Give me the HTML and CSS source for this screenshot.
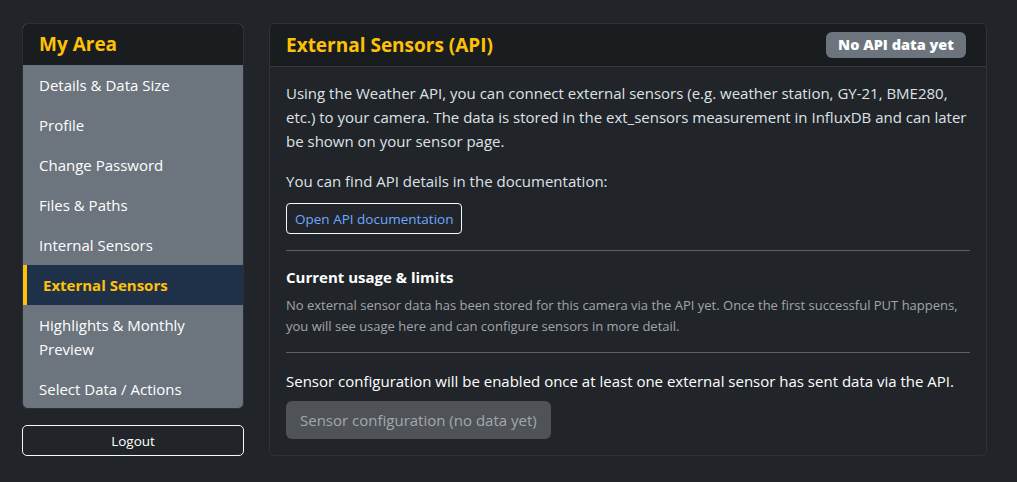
FILE: index.html
```html
<!DOCTYPE html>
<html lang="en">
<head>
<meta charset="utf-8">
<title>External Sensors</title>
<link rel="stylesheet" href="styles.css">
</head>
<body>
<div class="page">
  <aside class="side">
    <nav class="menu">
      <div class="menu-head">My Area</div>
      <a class="menu-item">Details &amp; Data Size</a>
      <a class="menu-item">Profile</a>
      <a class="menu-item">Change Password</a>
      <a class="menu-item">Files &amp; Paths</a>
      <a class="menu-item">Internal Sensors</a>
      <a class="menu-item active">External Sensors</a>
      <a class="menu-item">Highlights &amp; Monthly Preview</a>
      <a class="menu-item">Select Data / Actions</a>
    </nav>
    <button class="logout">Logout</button>
  </aside>
  <main class="card">
    <div class="card-head">
      <h1 class="card-title">External Sensors (API)</h1>
      <span class="badge">No API data yet</span>
    </div>
    <div class="card-body">
      <p class="intro">Using the Weather API, you can connect external sensors (e.g. weather station, GY-21, BME280, etc.) to your camera. The data is stored in the ext_sensors measurement in InfluxDB and can later be shown on your sensor page.</p>
      <p class="doc-text">You can find API details in the documentation:</p>
      <button class="btn-doc">Open API documentation</button>
      <hr class="sep">
      <h2 class="sub">Current usage &amp; limits</h2>
      <p class="small">No external sensor data has been stored for this camera via the API yet. Once the first successful PUT happens, you will see usage here and can configure sensors in more detail.</p>
      <hr class="sep sep2">
      <p class="cfg-text">Sensor configuration will be enabled once at least one external sensor has sent data via the API.</p>
      <button class="btn-cfg" disabled>Sensor configuration (no data yet)</button>
    </div>
  </main>
</div>
</body>
</html>
```
FILE: styles.css
```css
* { box-sizing: border-box; }
html, body { margin: 0; padding: 0; }
body {
  background: #212529;
  color: #dee2e6;
  font-family: "Open Sans", "Noto Sans", sans-serif;
  font-size: 15px;
  line-height: 24px;
}
.page {
  display: flex;
  gap: 25px;
  padding: 23px 30px 0 22px;
  align-items: flex-start;
}
.side {
  width: 222px;
  flex: none;
  display: flex;
  flex-direction: column;
  gap: 16px;
}
.menu {
  display: flex;
  flex-direction: column;
  border: 1px solid #2c3035;
  border-radius: 6px;
  overflow: hidden;
  background: #6c757d;
}
.menu-head {
  background: #1a1d20;
  color: #ffc107;
  font-weight: 700;
  font-size: 19px;
  height: 41px;
  line-height: 41px;
  padding-left: 16px;
}
.menu-item {
  display: block;
  color: #fff;
  padding: 8px 16px;
  line-height: 24px;
}
.menu-item:last-child { padding-bottom: 7px; }
.menu-item.active {
  background: #1f3149;
  color: #ffc107;
  font-weight: 700;
  border-left: 4px solid #ffc107;
  padding-left: 16px;
}
.logout {
  height: 31px;
  background: #212529;
  color: #fff;
  border: 1px solid #f8f9fa;
  border-radius: 5px;
  font-family: inherit;
  font-size: 13.5px;
}
.card {
  flex: 1;
  border: 1px solid #2f3338;
  border-radius: 6px;
  overflow: hidden;
  background: #212529;
}
.card-head {
  display: flex;
  align-items: center;
  justify-content: space-between;
  height: 43px;
  padding: 0 20px 0 16px;
  background: #1a1d20;
  border-bottom: 1px solid #34383d;
}
.card-title {
  margin: 0;
  color: #ffc107;
  font-size: 19px;
  font-weight: 700;
}
.badge {
  background: #6c757d;
  color: #fff;
  font-weight: 800;
  font-size: 14.5px;
  line-height: 26px;
  padding: 0 12px;
  border-radius: 6px;
}
.card-body {
  padding: 14px 16px 16px 16px;
}
.card-body p { margin: 0; }
.intro { margin-bottom: 16px !important; }
.doc-text { margin-bottom: 10px !important; }
.btn-doc {
  display: block;
  height: 31px;
  padding: 0 8px;
  background: transparent;
  color: #6ea8fe;
  border: 1px solid #f8f9fa;
  border-radius: 4px;
  font-family: inherit;
  font-size: 13.5px;
}
.sep {
  border: 0;
  border-top: 1px solid #5c6065;
  margin: 16px 0 14px;
}
.sub {
  margin: 0 0 6px;
  font-size: 15px;
  font-weight: 700;
  color: #fff;
}
.small {
  font-size: 13px;
  line-height: 21px;
  color: #a0a5aa;
}
.sep2 { margin: 15px 0 16px; }
.cfg-text { margin-bottom: 8px !important; color: #fff; }
.btn-cfg {
  display: block;
  height: 38px;
  padding: 0 14px;
  background: #4f5358;
  color: #a3a8ad;
  border: 0;
  border-radius: 6px;
  font-family: inherit;
  font-size: 15px;
}
```
